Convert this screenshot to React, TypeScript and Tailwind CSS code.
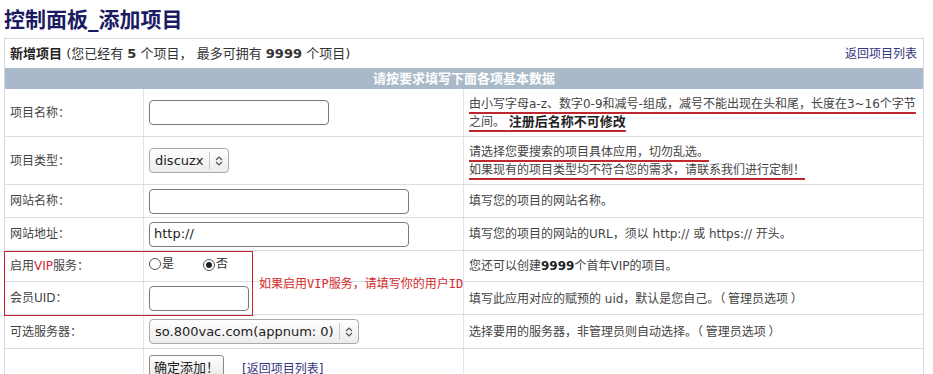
// 控制面板：添加项目表单

const font = "font-['DejaVu_Sans','Noto_Sans_CJK_SC',sans-serif]";

function Row({ h, label, children, desc }: { h: string; label?: React.ReactNode; children?: React.ReactNode; desc?: React.ReactNode }) {
    return (
        <div className={`grid grid-cols-[138px_320px_1fr] border-b border-[#d9dfe6] ${h}`}>
            <div className="flex items-center pl-[5px] text-[12px] text-[#444]">{label}</div>
            <div className="flex items-center pl-[5px] border-l border-[#dde5ee]">{children}</div>
            <div className="flex flex-col justify-center pl-[5px] border-l border-[#dde5ee] text-[12px] leading-[18px] text-[#444]">{desc}</div>
        </div>
    );
}

function TextBox({ w, value }: { w: string; value?: string }) {
    return (
        <div className={`${w} h-[25px] rounded-[4px] border border-[#7a7a7a] bg-white flex items-center px-[4px] text-[13px] text-[#222]`}>
            {value}
        </div>
    );
}

function SelectBox({ value }: { value: string }) {
    return (
        <div className="h-[25px] rounded-[4px] border border-[#a9a9a9] bg-gradient-to-b from-white to-[#ececec] flex items-center text-[13px] text-[#222]">
            <span className="pl-[5px] pr-[5px]">{value}</span>
            <span className="h-[17px] border-l border-[#c8c8c8]"></span>
            <svg width="16" height="12" viewBox="0 0 16 12" className="mx-[1px]">
                <path d="M5 5 L8 2 L11 5" fill="none" stroke="#555" strokeWidth="1.2" />
                <path d="M5 7 L8 10 L11 7" fill="none" stroke="#555" strokeWidth="1.2" />
            </svg>
        </div>
    );
}

function Radio({ checked }: { checked?: boolean }) {
    return (
        <span className="inline-flex w-[12px] h-[12px] rounded-full border border-[#555] bg-white items-center justify-center">
            {checked && <span className="w-[6px] h-[6px] rounded-full bg-[#222]"></span>}
        </span>
    );
}

const ul = "underline decoration-[#c0262d] decoration-[1.5px] underline-offset-[4px]";
const cjk = "font-['Noto_Sans_CJK_SC',sans-serif]";

export default function App() {
    return (
        <div className={`${font} bg-white w-[933px] h-[374px] overflow-hidden`}>
            <h1 className="pl-[4px] pt-[6px] text-[21px] leading-[28px] font-bold text-[#1b1b64]">控制面板_添加项目</h1>

            <div className="mt-[4px] ml-[4px] w-[920px] border border-[#d3dae2] border-b-0">
                <div className="h-[29px] flex items-center justify-between px-[5px] text-[13px] text-[#333]">
                    <span>
                        <b className="text-[#222]">新增项目</b> (您已经有 <b>5</b> 个项目， 最多可拥有 <b>9999</b> 个项目)
                    </span>
                    <a href="#" className="text-[12px] text-[#34347e] mr-[1px]">返回项目列表</a>
                </div>
                <div className="h-[21px] bg-[#aab9c9] flex items-center justify-center text-[13px] font-bold text-white">
                    请按要求填写下面各项基本数据
                </div>

                <Row
                    h="h-[48px]"
                    label="项目名称："
                    desc={
                        <>
                            <span className={`${ul} whitespace-nowrap`}>由小写字母a-z、数字0-9和减号-组成，减号不能出现在头和尾，长度在3~16个字节</span>
                            <span className={ul + " self-start"}>之间。 <b className="text-[13px] text-[#222]">注册后名称不可修改</b></span>
                        </>
                    }
                >
                    <TextBox w="w-[180px]" />
                </Row>

                <Row
                    h="h-[48px]"
                    label="项目类型："
                    desc={
                        <>
                            <span className={ul + " self-start"}>请选择您要搜索的项目具体应用，切勿乱选。</span>
                            <span className={ul + " self-start"}>如果现有的项目类型均不符合您的需求，请联系我们进行定制！</span>
                        </>
                    }
                >
                    <SelectBox value="discuzx" />
                </Row>

                <Row h="h-[33px]" label="网站名称：" desc="填写您的项目的网站名称。">
                    <TextBox w="w-[260px]" />
                </Row>

                <Row h="h-[33px]" label="网站地址：" desc="填写您的项目的网站的URL，须以 http:// 或 https:// 开头。">
                    <TextBox w="w-[260px]" value="http://" />
                </Row>

                <div className="relative">
                    <Row
                        h="h-[31px]"
                        label={<span>启用<span className="text-[#d0252d]">VIP</span>服务：</span>}
                        desc={<span>您还可以创建<b className="text-[#222]">9999</b>个首年VIP的项目。</span>}
                    >
                        <div className="flex items-center text-[12px] text-[#333] -mt-[4px]">
                            <Radio />
                            <span className="ml-[1px]">是</span>
                            <span className="ml-[29px]"><Radio checked /></span>
                            <span className="ml-[1px]">否</span>
                        </div>
                    </Row>
                    <Row
                        h="h-[33px]"
                        label="会员UID："
                        desc={<span>填写此应用对应的赋预的 uid，默认是您自己。<span className={cjk}>（ 管理员选项 ）</span></span>}
                    >
                        <TextBox w="w-[100px]" />
                    </Row>
                    <div className="absolute left-[-1px] top-0 w-[249px] h-[65px] border border-[#c8232c] pointer-events-none"></div>
                    <div className="absolute left-[254px] top-[24px] text-[12px] leading-[18px] text-[#d42a2a] font-['DejaVu_Sans_Mono','Noto_Sans_CJK_SC',monospace]">
                        如果启用VIP服务，请填写你的用户ID
                    </div>
                </div>

                <Row
                    h="h-[34px]"
                    label="可选服务器："
                    desc={<span>选择要用的服务器，非管理员则自动选择。<span className={cjk}>（ 管理员选项 ）</span></span>}
                >
                    <SelectBox value="so.800vac.com(appnum: 0)" />
                </Row>

                <div className="grid grid-cols-[138px_320px_1fr] h-[40px]">
                    <div></div>
                    <div className="flex items-start pt-[6px] pl-[5px] border-l border-[#dde5ee]">
                        <button className="h-[26px] px-[4px] rounded-[3px] border border-[#8a8a8a] bg-gradient-to-b from-white to-[#e6e6e6] text-[13px] text-[#222]">确定添加！</button>
                        <a href="#" className="ml-[18px] mt-[5px] text-[12px] text-[#34347e]">[返回项目列表]</a>
                    </div>
                    <div className="border-l border-[#dde5ee]"></div>
                </div>
            </div>
        </div>
    );
}
